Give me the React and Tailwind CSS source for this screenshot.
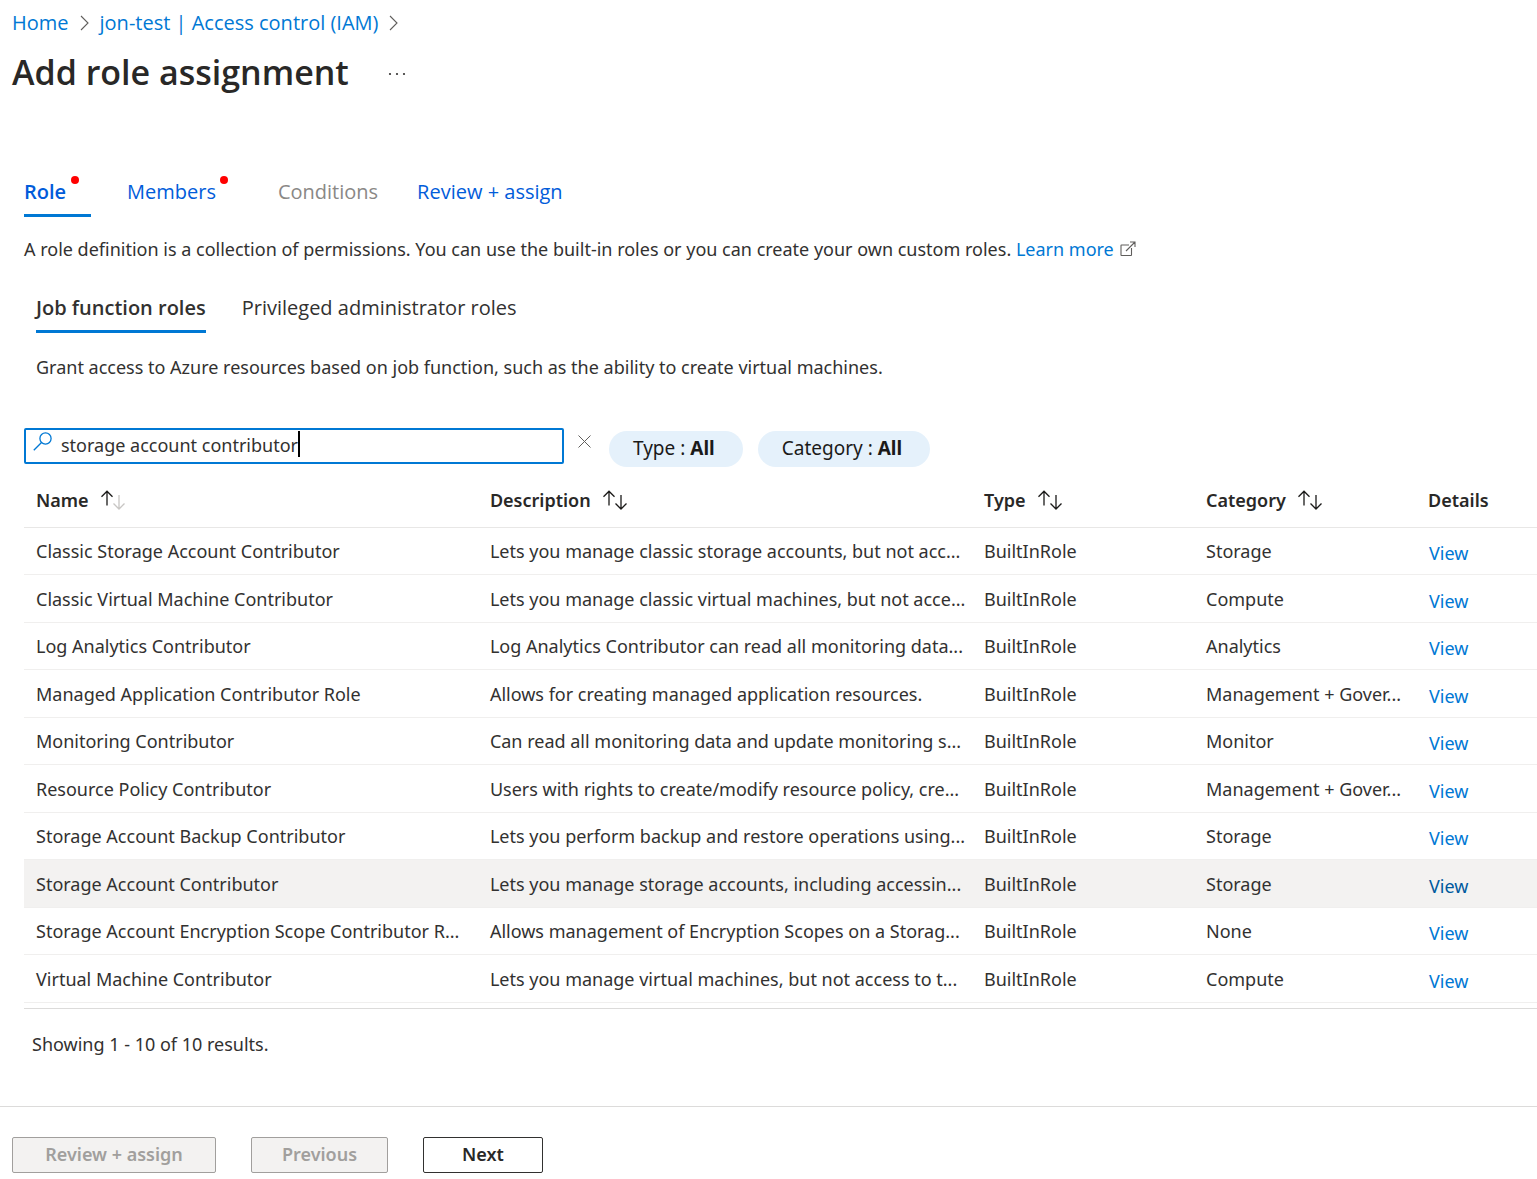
const roles = [
  { name: "Classic Storage Account Contributor", description: "Lets you manage classic storage accounts, but not acc...", category: "Storage" },
  { name: "Classic Virtual Machine Contributor", description: "Lets you manage classic virtual machines, but not acce...", category: "Compute" },
  { name: "Log Analytics Contributor", description: "Log Analytics Contributor can read all monitoring data...", category: "Analytics" },
  { name: "Managed Application Contributor Role", description: "Allows for creating managed application resources.", category: "Management + Gover..." },
  { name: "Monitoring Contributor", description: "Can read all monitoring data and update monitoring s...", category: "Monitor" },
  { name: "Resource Policy Contributor", description: "Users with rights to create/modify resource policy, cre...", category: "Management + Gover..." },
  { name: "Storage Account Backup Contributor", description: "Lets you perform backup and restore operations using...", category: "Storage" },
  { name: "Storage Account Contributor", description: "Lets you manage storage accounts, including accessin...", category: "Storage", selected: true },
  { name: "Storage Account Encryption Scope Contributor R...", description: "Allows management of Encryption Scopes on a Storag...", category: "None" },
  { name: "Virtual Machine Contributor", description: "Lets you manage virtual machines, but not access to t...", category: "Compute" },
];

function Chevron() {
  return (
    <svg width="9" height="16" viewBox="0 0 9 16" fill="none" stroke="#605e5c" strokeWidth="1.1" aria-hidden="true">
      <path d="M1 1l7 7-7 7" />
    </svg>
  );
}

function SortArrows({ ascending }) {
  return (
    <svg width="26" height="20" viewBox="0 0 26 20" fill="none" stroke="#1b1a19" strokeWidth="1.3" aria-hidden="true">
      <path d="M7 15.500V1.500M1.500 6.700L7 1.200l5.500 5.500" />
      <path d="M19 5v14M13.500 13.500L19 19l5.500-5.500" stroke={ascending ? "#c8c6c4" : "#1b1a19"} />
    </svg>
  );
}

function SortableHeader({ label, ascending }) {
  return (
    <th scope="col" className="p-0 pt-1.5 pl-3 text-left font-semibold" aria-sort={ascending ? "ascending" : "none"}>
      <button type="button" className="flex items-center gap-[11px] font-semibold">
        {label}
        <SortArrows ascending={ascending} />
      </button>
    </th>
  );
}

function FilterPill({ label }) {
  return (
    <button type="button" className="h-9 rounded-full bg-[#e5f1fb] pr-7 pb-0.5 pl-6 text-[19px] leading-6 text-[#1b1a19]">
      {label} : <b className="font-bold">All</b>
    </button>
  );
}

export default function App() {
  return (
    <div className="overflow-x-hidden bg-white font-['Noto_Sans','Open_Sans',sans-serif] text-lg leading-6 text-[#323130]">
      <header className="px-3 pt-[9px]">
        <nav aria-label="Breadcrumb" className="flex items-center gap-[11px] font-['Open_Sans','Noto_Sans',sans-serif] text-xl leading-7 text-[#0078d4]">
          <a href="#home">Home</a>
          <Chevron />
          <a href="#access">jon-test | Access control (IAM)</a>
          <Chevron />
        </nav>
        <div className="mt-[11px] flex items-center gap-[38px]">
          <h1 className="font-['Open_Sans','Noto_Sans',sans-serif] text-[34px] leading-12 font-semibold text-[#292827]">Add role assignment</h1>
          <button type="button" aria-label="More options" className="mt-1">
            <svg width="20" height="4" viewBox="0 0 20 4" fill="#323130" aria-hidden="true">
              <circle cx="3" cy="2" r="1.1" />
              <circle cx="10" cy="2" r="1.1" />
              <circle cx="17" cy="2" r="1.1" />
            </svg>
          </button>
        </div>
      </header>

      <main className="pl-6">
        <div role="tablist" aria-label="Steps" className="mt-20 flex items-start font-['Open_Sans','Noto_Sans',sans-serif] text-xl leading-8 text-[#015cda]">
          <button type="button" role="tab" aria-selected="true" className="relative mr-9 h-[41px] w-[67px] border-b-3 border-[#0078d4] pb-1.5 text-left font-semibold">
            Role
            <span className="absolute top-0 right-3 h-2 w-2 rounded-full bg-[#ff0000]" />
          </button>
          <button type="button" role="tab" aria-selected="false" className="relative mr-[50px] pr-3">
            Members
            <span className="absolute top-0 right-0 h-2 w-2 rounded-full bg-[#ff0000]" />
          </button>
          <button type="button" role="tab" aria-selected="false" disabled className="mr-[39px] text-[#8a8886]">Conditions</button>
          <button type="button" role="tab" aria-selected="false">Review + assign</button>
        </div>

        <p className="mt-5 flex items-center">
          <span>
            A role definition is a collection of permissions. You can use the built-in roles or you can create your own custom roles.{" "}
            <a href="#learn" className="text-[#0078d4]">Learn more</a>
          </span>
          <svg className="ml-1.5" width="16" height="16" viewBox="0 0 16 16" fill="none" stroke="#605e5c" strokeWidth="1.1" aria-hidden="true">
            <path d="M9 4H1.500q-.5 0-.5.5v9.500q0 .5.5.5H11q.5 0 .5-.5V7M10 1h5v5M15 1L6 10" />
          </svg>
        </p>

        <div role="tablist" aria-label="Role kind" className="mt-[33px] flex items-start gap-9 pl-3 font-['Open_Sans','Noto_Sans',sans-serif] text-xl leading-7">
          <button type="button" role="tab" aria-selected="true" className="border-b-3 border-[#0078d4] pb-2 font-semibold">Job function roles</button>
          <button type="button" role="tab" aria-selected="false">Privileged administrator roles</button>
        </div>

        <p className="mt-[22px] pl-3">Grant access to Azure resources based on job function, such as the ability to create virtual machines.</p>

        <div className="mt-[49px] flex items-start">
          <label className="flex h-9 w-[540px] items-start rounded-xs border-2 border-[#0078d4] pl-[7px]">
            <svg className="mt-0.5" width="19" height="19" viewBox="0 0 19 19" fill="none" stroke="#0078d4" strokeWidth="1.3" aria-hidden="true">
              <circle cx="12.500" cy="6.500" r="5.600" />
              <path d="M8.500 10.500L.8 18.200" />
            </svg>
            <input type="text" aria-label="Search roles" defaultValue="storage account contributor" className="mt-px ml-[9px] h-7 [field-sizing:content] bg-transparent text-lg leading-7 outline-none" />
            <span className="mt-px h-[26px] w-0.5 bg-black" />
          </label>
          <button type="button" aria-label="Clear search" className="mx-3.5 mt-[7px]">
            <svg width="13" height="13" viewBox="0 0 13 13" stroke="#605e5c" strokeWidth="1" aria-hidden="true">
              <path d="M.5.5l12 12M12.500.5l-12 12" />
            </svg>
          </button>
          <div className="ml-1 flex gap-[15px] pt-[3px]">
            <FilterPill label="Type" />
            <FilterPill label="Category" />
          </div>
        </div>

        <div className="border-b border-[#dcdbda] pb-[5px]">
          <table className="w-full table-fixed border-separate border-spacing-0 whitespace-nowrap">
            <colgroup>
              <col className="w-[30%]" />
              <col />
              <col className="w-[222px]" />
              <col className="w-[222px]" />
              <col className="w-[121px]" />
            </colgroup>
            <thead>
              <tr className="h-[61px] text-[#292827] *:border-b *:border-[#e8e7e6]">
                <SortableHeader label="Name" ascending />
                <SortableHeader label="Description" />
                <SortableHeader label="Type" />
                <SortableHeader label="Category" />
                <th scope="col" className="p-0 pt-1.5 pl-3 text-left font-semibold">Details</th>
              </tr>
            </thead>
            <tbody>
              {roles.map((r) => (
                <tr key={r.name} className={`h-[47px] even:h-12 *:border-b *:border-[#f0efee] ${r.selected ? "bg-[#f3f2f1]" : ""}`}>
                  <td className="p-0 pl-3">{r.name}</td>
                  <td className="p-0 pl-3">{r.description}</td>
                  <td className="p-0 pl-3">BuiltInRole</td>
                  <td className="p-0 pl-3">{r.category}</td>
                  <td className="p-0 pt-1 pl-[13px]">
                    <a href="#view" className={r.selected ? "text-[#005a9e]" : "text-[#0078d4]"}>View</a>
                  </td>
                </tr>
              ))}
            </tbody>
          </table>
        </div>
        <p className="mt-[23px] pl-2">Showing 1 - 10 of 10 results.</p>
      </main>

      <footer className="mt-[50px] flex gap-[35px] border-t border-[#dcdbda] px-3 pt-[30px] pb-1.5 font-semibold">
        <button type="button" disabled className="h-9 w-[204px] rounded-xs border border-[#a19f9d] bg-[#f3f2f1] pb-0.5 text-[#a19f9d]">Review + assign</button>
        <button type="button" disabled className="h-9 w-[137px] rounded-xs border border-[#a19f9d] bg-[#f3f2f1] pb-0.5 text-[#a19f9d]">Previous</button>
        <button type="button" className="h-9 w-[120px] rounded-xs border border-[#323130] bg-white pb-0.5 text-[#292827]">Next</button>
      </footer>
    </div>
  );
}
